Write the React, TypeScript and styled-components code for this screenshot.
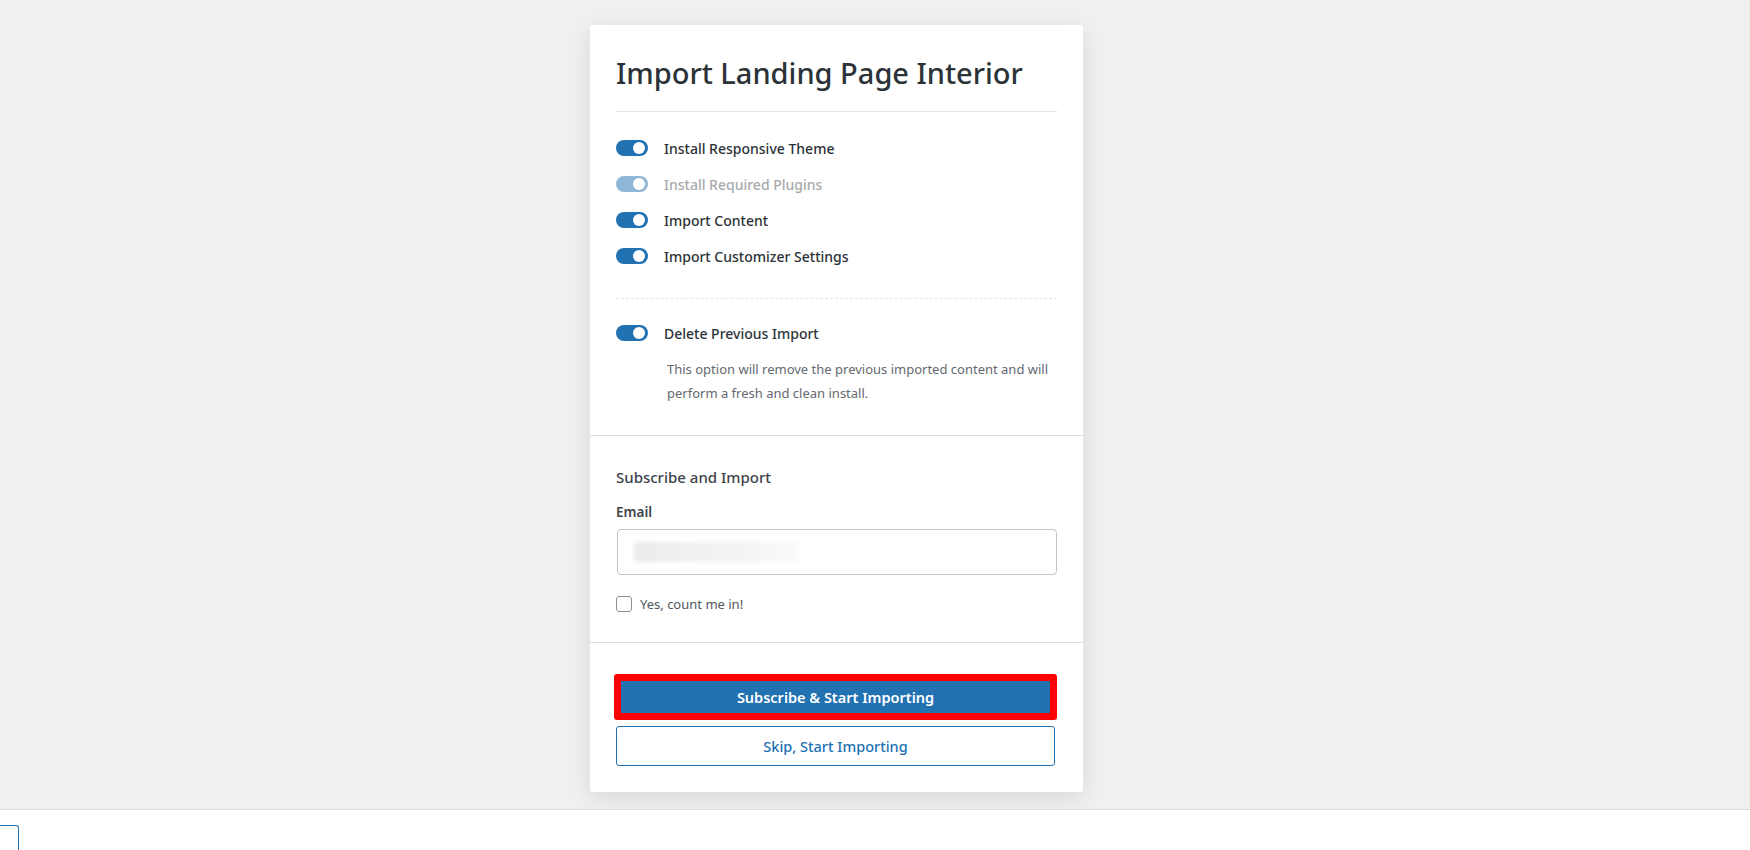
import React from 'react';
import styled, { createGlobalStyle } from 'styled-components';

const BLUE = '#2271b1';
const TEXT = '#2c3338';

const Global = createGlobalStyle`
  html, body { margin: 0; padding: 0; background: #f0f0f1; }
  body { font-family: "Noto Sans", "Open Sans", sans-serif; color: ${TEXT}; }
`;

const Page = styled.div`
  display: flex;
  flex-direction: column;
  min-height: 850px;
`;

const Stage = styled.div`
  flex: 1;
  display: flex;
  justify-content: center;
  align-items: flex-start;
  padding-top: 25px;
  padding-right: 77px;
`;

const Card = styled.div`
  width: 493px;
  box-sizing: border-box;
  background: #fff;
  border-radius: 3px;
  box-shadow: 0 6px 24px rgba(0, 0, 0, 0.1);
  display: flex;
  flex-direction: column;
`;

const Top = styled.div`
  padding: 26px 26px 30px 26px;
  border-bottom: 1px solid #dcdcde;
`;

const Title = styled.h1`
  margin: 0;
  padding: 2px 0 18px;
  font-size: 29px;
  font-weight: 500;
  line-height: 40px;
  color: #2c3338;
  border-bottom: 1px solid #e2e4e7;
`;

const Options = styled.div`
  display: flex;
  flex-direction: column;
  gap: 12px;
  padding: 24px 0 30px;
  border-bottom: 1px dashed #e2e4e7;
`;

const Row = styled.div<{ $muted?: boolean }>`
  display: flex;
  align-items: center;
  gap: 16px;
  height: 24px;
  font-size: 14px;
  font-weight: 500;
  color: ${(p) => (p.$muted ? '#a7aaad' : TEXT)};
`;

const Toggle = styled.span<{ $muted?: boolean }>`
  position: relative;
  width: 32px;
  height: 16px;
  border-radius: 8px;
  background: ${(p) => (p.$muted ? '#8fb6d6' : BLUE)};
  flex-shrink: 0;
  &::after {
    content: '';
    position: absolute;
    right: 3px;
    top: 2px;
    width: 12px;
    height: 12px;
    border-radius: 50%;
    background: #fff;
  }
`;

const DeleteBlock = styled.div`
  padding-top: 22px;
`;

const Desc = styled.p`
  margin: 12px 0 0 51px;
  font-size: 13px;
  line-height: 24px;
  color: #646970;
`;

const Subscribe = styled.div`
  padding: 31px 26px 29px 26px;
  border-bottom: 1px solid #dcdcde;
`;

const SubTitle = styled.h3`
  margin: 0 0 16px;
  font-size: 15px;
  font-weight: 500;
  color: #3c434a;
`;

const Label = styled.div`
  font-size: 13.5px;
  font-weight: 600;
  color: #3c434a;
  margin-bottom: 8px;
`;

const Input = styled.div`
  height: 44px;
  margin-left: 1px;
  border: 1px solid #c3c4c7;
  border-radius: 4px;
  display: flex;
  align-items: center;
  padding-left: 16px;
`;

const Blur = styled.span`
  width: 165px;
  height: 20px;
  background: linear-gradient(90deg, #ececec, #f4f4f4 70%, #fbfbfb);
  filter: blur(2px);
`;

const Check = styled.label`
  display: flex;
  align-items: center;
  gap: 8px;
  margin-top: 20px;
  font-size: 13px;
  color: #50575e;
`;

const Box = styled.span`
  width: 14px;
  height: 14px;
  border: 1px solid #8c8f94;
  border-radius: 3px;
`;

const Actions = styled.div`
  padding: 31px 26px 26px 24px;
  display: flex;
  flex-direction: column;
  gap: 6px;
`;

const Primary = styled.button`
  height: 46px;
  border: 7px solid #ff0000;
  border-radius: 3px;
  background: ${BLUE};
  color: #fff;
  font-family: inherit;
  font-size: 14.5px;
  font-weight: 600;
`;

const Secondary = styled.button`
  height: 40px;
  margin: 0 2px;
  border: 1px solid ${BLUE};
  border-radius: 3px;
  background: #fff;
  color: ${BLUE};
  font-family: inherit;
  font-size: 14.5px;
  font-weight: 500;
`;

const Footer = styled.div`
  height: 40px;
  background: #fff;
  border-top: 1px solid #dcdcde;
  display: flex;
  align-items: flex-end;
`;

const Stub = styled.div`
  width: 18px;
  height: 24px;
  border: 1px solid ${BLUE};
  border-left: none;
  border-bottom: none;
  border-radius: 0 3px 0 0;
`;

const items = [
  { label: 'Install Responsive Theme' },
  { label: 'Install Required Plugins', muted: true },
  { label: 'Import Content' },
  { label: 'Import Customizer Settings' },
];

export default function App() {
  return (
    <Page>
      <Global />
      <Stage>
        <Card>
          <Top>
            <Title>Import Landing Page Interior</Title>
            <Options>
              {items.map((it) => (
                <Row key={it.label} $muted={it.muted}>
                  <Toggle $muted={it.muted} />
                  {it.label}
                </Row>
              ))}
            </Options>
            <DeleteBlock>
              <Row>
                <Toggle />
                Delete Previous Import
              </Row>
              <Desc>
                This option will remove the previous imported content and will
                perform a fresh and clean install.
              </Desc>
            </DeleteBlock>
          </Top>
          <Subscribe>
            <SubTitle>Subscribe and Import</SubTitle>
            <Label>Email</Label>
            <Input>
              <Blur />
            </Input>
            <Check>
              <Box />
              Yes, count me in!
            </Check>
          </Subscribe>
          <Actions>
            <Primary>Subscribe &amp; Start Importing</Primary>
            <Secondary>Skip, Start Importing</Secondary>
          </Actions>
        </Card>
      </Stage>
      <Footer>
        <Stub />
      </Footer>
    </Page>
  );
}
